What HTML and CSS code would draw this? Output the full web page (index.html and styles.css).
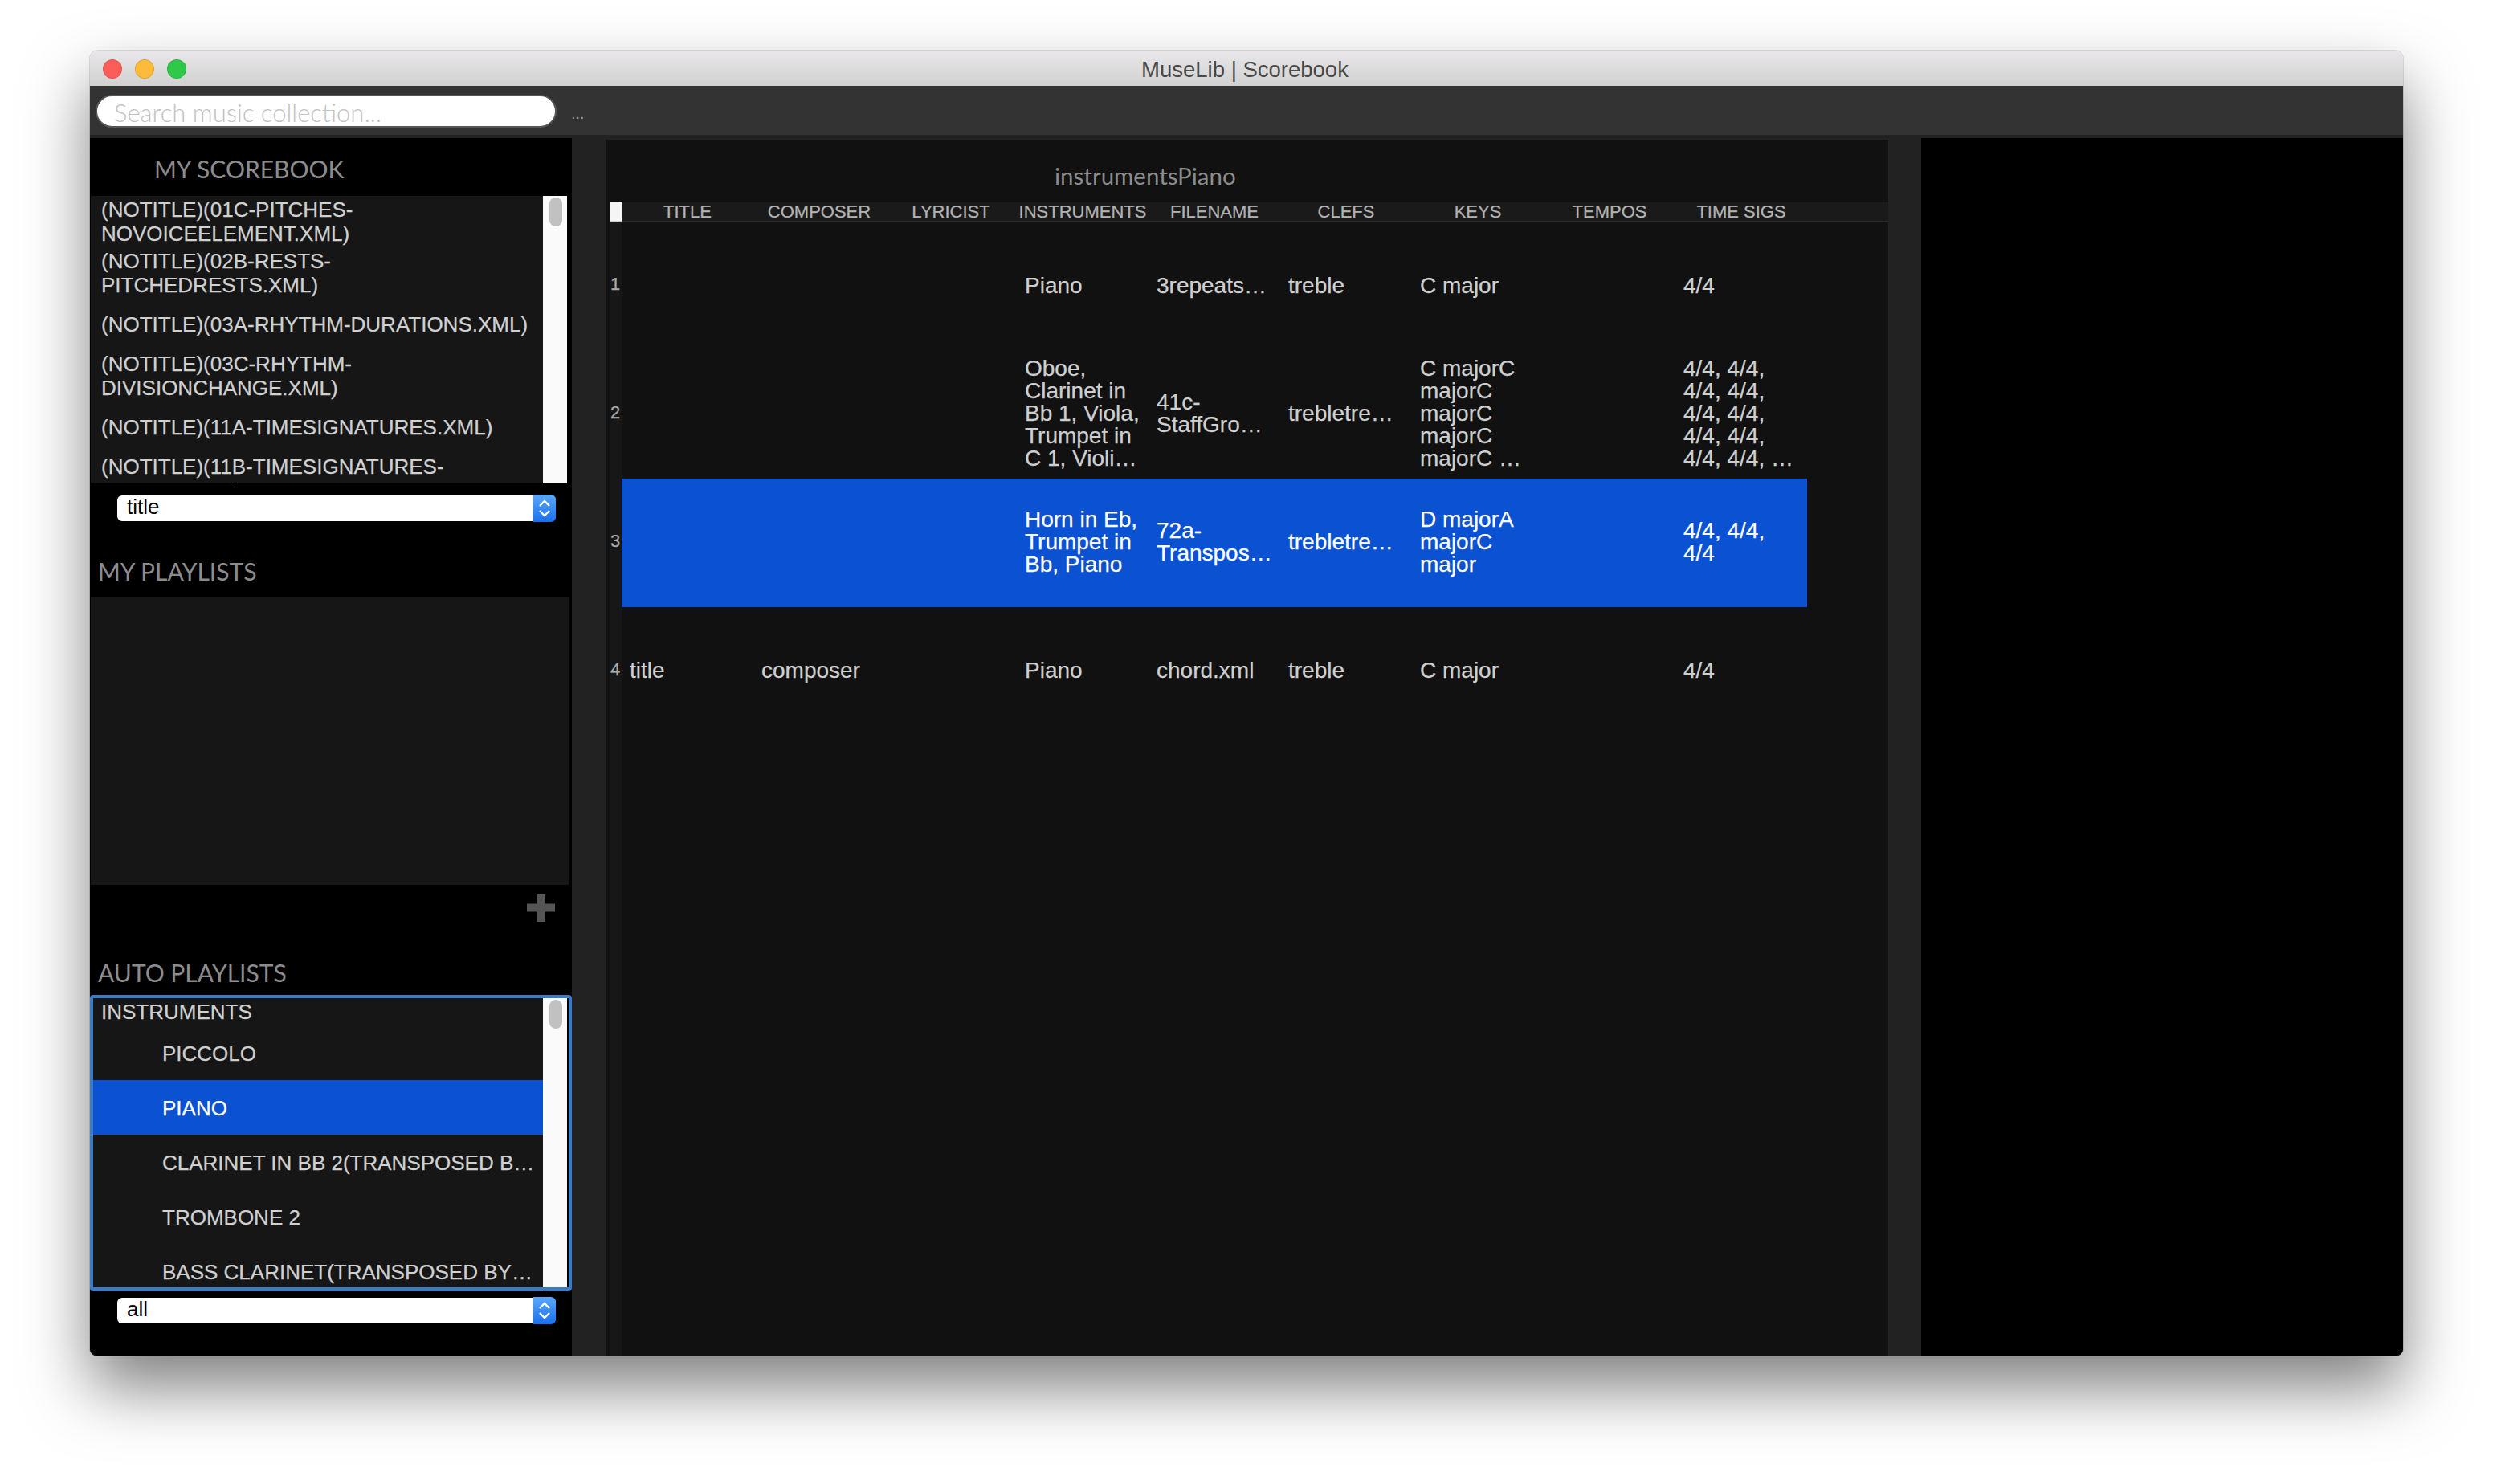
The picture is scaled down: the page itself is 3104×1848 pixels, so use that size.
FILE: index.html
```html
<!DOCTYPE html>
<html lang="en">
<head>
    <meta charset="UTF-8">
    <title>MuseLib | Scorebook</title>
    <link rel="stylesheet" href="styles.css">
</head>
<body>
    <div class="window">
        <header class="titlebar">
            <span class="light red"></span>
            <span class="light yellow"></span>
            <span class="light green"></span>
            <div class="title">MuseLib | Scorebook</div>
        </header>
        <div class="toolbar">
            <input class="search" type="text" placeholder="Search music collection...">
            <span class="dots">...</span>
        </div>
        <div class="content">
            <aside class="sidebar">
                <h2 class="head head-book">MY SCOREBOOK</h2>
                <div class="list list-book">
                    <ul class="items">
                        <li>(NOTITLE)(01C-PITCHES-<br>NOVOICEELEMENT.XML)</li>
                        <li>(NOTITLE)(02B-RESTS-<br>PITCHEDRESTS.XML)</li>
                        <li>(NOTITLE)(03A-RHYTHM-DURATIONS.XML)</li>
                        <li>(NOTITLE)(03C-RHYTHM-<br>DIVISIONCHANGE.XML)</li>
                        <li>(NOTITLE)(11A-TIMESIGNATURES.XML)</li>
                        <li>(NOTITLE)(11B-TIMESIGNATURES-<br>NOTIME.XML)</li>
                    </ul>
                    <div class="scrollbar"><div class="thumb"></div></div>
                </div>
                <div class="select select-book">
                    <span class="select-value">title</span>
                    <span class="select-btn">
                        <svg width="16" height="24" viewBox="0 0 16 24"><path d="M2 9 L8 3 L14 9 M2 15 L8 21 L14 15" fill="none" stroke="#fff" stroke-width="2.4"/></svg>
                    </span>
                </div>
                <h2 class="head head-my">MY PLAYLISTS</h2>
                <div class="playlist-box"></div>
                <div class="add-row">
                    <svg width="35" height="35" viewBox="0 0 35 35"><path d="M12 0h11v12.500h12v10H23V35H12V22.500H0v-10h12z" fill="#555"/></svg>
                </div>
                <h2 class="head head-auto">AUTO PLAYLISTS</h2>
                <div class="focus">
                    <div class="list list-auto">
                        <ul class="tree">
                            <li class="parent">INSTRUMENTS</li>
                            <li>PICCOLO</li>
                            <li class="picked">PIANO</li>
                            <li>CLARINET IN BB 2(TRANSPOSED B…</li>
                            <li>TROMBONE 2</li>
                            <li>BASS CLARINET(TRANSPOSED BY…</li>
                        </ul>
                        <div class="scrollbar"><div class="thumb"></div></div>
                    </div>
                </div>
                <div class="select select-auto">
                    <span class="select-value">all</span>
                    <span class="select-btn">
                        <svg width="16" height="24" viewBox="0 0 16 24"><path d="M2 9 L8 3 L14 9 M2 15 L8 21 L14 15" fill="none" stroke="#fff" stroke-width="2.4"/></svg>
                    </span>
                </div>
            </aside>
            <main class="main">
                <div class="main-title">instrumentsPiano</div>
                <div class="table-wrap">
                    <table class="scores">
                        <thead>
                            <tr>
                                <th class="corner"></th>
                                <th>TITLE</th>
                                <th>COMPOSER</th>
                                <th>LYRICIST</th>
                                <th>INSTRUMENTS</th>
                                <th>FILENAME</th>
                                <th>CLEFS</th>
                                <th>KEYS</th>
                                <th>TEMPOS</th>
                                <th>TIME SIGS</th>
                                <th class="filler"></th>
                            </tr>
                        </thead>
                        <tbody>
                            <tr>
                                <td class="num">1</td>
                                <td></td>
                                <td></td>
                                <td></td>
                                <td>Piano</td>
                                <td>3repeats…</td>
                                <td>treble</td>
                                <td>C major</td>
                                <td></td>
                                <td>4/4</td>
                                <td class="filler"></td>
                            </tr>
                            <tr>
                                <td class="num">2</td>
                                <td></td>
                                <td></td>
                                <td></td>
                                <td>Oboe,<br>Clarinet in<br>Bb 1, Viola,<br>Trumpet in<br>C 1, Violi…</td>
                                <td>41c-<br>StaffGro…</td>
                                <td>trebletre…</td>
                                <td>C majorC<br>majorC<br>majorC<br>majorC<br>majorC …</td>
                                <td></td>
                                <td>4/4, 4/4,<br>4/4, 4/4,<br>4/4, 4/4,<br>4/4, 4/4,<br>4/4, 4/4, …</td>
                                <td class="filler"></td>
                            </tr>
                            <tr class="selected">
                                <td class="num">3</td>
                                <td></td>
                                <td></td>
                                <td></td>
                                <td>Horn in Eb,<br>Trumpet in<br>Bb, Piano</td>
                                <td>72a-<br>Transpos…</td>
                                <td>trebletre…</td>
                                <td>D majorA<br>majorC<br>major</td>
                                <td></td>
                                <td>4/4, 4/4,<br>4/4</td>
                                <td class="filler"></td>
                            </tr>
                            <tr>
                                <td class="num">4</td>
                                <td>title</td>
                                <td>composer</td>
                                <td></td>
                                <td>Piano</td>
                                <td>chord.xml</td>
                                <td>treble</td>
                                <td>C major</td>
                                <td></td>
                                <td>4/4</td>
                                <td class="filler"></td>
                            </tr>
                        </tbody>
                    </table>
                </div>
            </main>
            <div class="right-panel"></div>
        </div>
    </div>
</body>
</html>
```
FILE: styles.css
```css
* {
    box-sizing: border-box;
}

html, body {
    margin: 0;
    height: 100%;
    background: #fff;
    font-family: "Liberation Sans", Arial, sans-serif;
    overflow: hidden;
}

body {
    padding: 63px 112px;
}

ul {
    list-style: none;
    margin: 0;
    padding: 0;
}

.window {
    width: 2880px;
    height: 1625px;
    display: flex;
    flex-direction: column;
    border-radius: 10px 10px 8px 8px;
    overflow: hidden;
    box-shadow: 0 40px 80px rgba(0, 0, 0, 0.5), 0 0 0 1px rgba(0, 0, 0, 0.12);
}

.titlebar {
    height: 44px;
    flex: none;
    display: flex;
    align-items: center;
    padding-left: 16px;
    gap: 16px;
    position: relative;
    background: linear-gradient(#e9e7e9, #d1d1d1);
    border-top: 1px solid #c4c4c4;
}

.light {
    width: 24px;
    height: 24px;
    border-radius: 50%;
    border: 1px solid rgba(0, 0, 0, 0.12);
}

.red { background: #fc5d58; }
.yellow { background: #fdbb3c; }
.green { background: #2fc94a; }

.title {
    position: absolute;
    left: 0;
    right: 4px;
    top: 2px;
    bottom: 0;
    display: flex;
    align-items: center;
    justify-content: center;
    font-size: 27.500px;
    color: #484848;
}

.toolbar {
    height: 61px;
    flex: none;
    display: flex;
    align-items: center;
    padding: 2px 0 0 7px;
    background: #333;
}

.search {
    width: 574px;
    height: 41px;
    border: 2px solid #555;
    border-radius: 21px;
    padding: 2px 21px 0 21px;
    background: #fff;
    font-family: Lato, sans-serif;
    font-size: 31px;
    font-weight: 300;
    outline: none;
}

.search::placeholder {
    color: #c2c2c2;
}

.dots {
    margin-left: 18px;
    margin-top: 6px;
    color: #999;
    font-size: 20px;
}

.content {
    flex: 1;
    display: flex;
    min-height: 0;
    background: #222;
}

.sidebar {
    width: 600px;
    flex: none;
    margin-top: 4px;
    background: #000;
}

.head {
    margin: 0;
    font-family: Lato, sans-serif;
    font-weight: 400;
    font-size: 30px;
    line-height: 40px;
    color: #8c8c8c;
}

.head-book {
    height: 72px;
    padding: 18px 0 0 80px;
}

.head-my {
    height: 95px;
    padding: 42px 0 0 10px;
}

.head-auto {
    height: 59px;
    padding: 11px 0 0 10px;
}

.list {
    display: flex;
    background: #161616;
    color: #d0d0d0;
    font-size: 26px;
    line-height: 30px;
    overflow: hidden;
    -webkit-text-stroke: 0.25px;
}

.list-book {
    width: 593px;
    height: 358px;
    margin-left: 1px;
}

.items {
    flex: 1;
}

.items li {
    height: 64px;
    padding-left: 13px;
    display: flex;
    align-items: center;
}

.scrollbar {
    width: 30px;
    flex: none;
    padding: 2px 6px 0 8px;
    background: #fafafa;
}

.thumb {
    height: 36px;
    border-radius: 8px;
    background: #c1c1c1;
}

.select {
    width: 546px;
    height: 32px;
    margin-left: 34px;
    display: flex;
    justify-content: space-between;
    align-items: center;
    background: #fff;
    border-radius: 6px;
    color: #000;
    font-size: 26px;
}

.select-book {
    margin-top: 15px;
}

.select-auto {
    margin-top: 8px;
}

.select-value {
    padding: 0 0 4px 12px;
    line-height: 28px;
}

.select-btn {
    width: 28px;
    height: calc(100% + 2px);
    display: flex;
    align-items: center;
    justify-content: center;
    border-radius: 0 6px 6px 0;
    background: linear-gradient(#5aa8fb, #1a6fec);
}

.playlist-box {
    width: 595px;
    height: 358px;
    margin-left: 1px;
    background: #161616;
}

.add-row {
    height: 78px;
    display: flex;
    justify-content: flex-end;
    align-items: flex-start;
    padding: 11px 21px 0 0;
}

.focus {
    height: 369px;
    border: 4px solid #3a7bc5;
    border-bottom-width: 5px;
    border-radius: 4px;
    background: #000;
}

.list-auto {
    width: 590px;
    height: 360px;
}

.tree {
    flex: 1;
}

.tree li {
    height: 68px;
    padding: 2px 0 0 86px;
    line-height: 66px;
    white-space: nowrap;
}

.tree .parent {
    height: 34px;
    padding: 0 0 0 10px;
    line-height: 34px;
}

.tree .picked {
    background: #0b52d3;
    color: #fff;
}

.main {
    width: 1597px;
    flex: none;
    margin: 6px 0 0 42px;
    background: #111;
    display: flex;
    flex-direction: column;
}

.main-title {
    height: 78px;
    padding: 23px 0 0 559px;
    font-family: Lato, sans-serif;
    font-weight: 400;
    font-size: 29.500px;
    line-height: 44px;
    color: #8c8c8c;
}

.table-wrap {
    flex: 1;
    margin-left: 6px;
    background: linear-gradient(#171717, #171717) left top / 14px 100% no-repeat;
}

.scores {
    width: 1591px;
    table-layout: fixed;
    border-collapse: collapse;
    font-size: 28px;
    line-height: 28px;
    color: #cfcfcf;
    -webkit-text-stroke: 0.25px;
}

.scores th {
    width: 164px;
    height: 24px;
    padding: 0;
    font-size: 22px;
    font-weight: normal;
    line-height: 22px;
    color: #b2b2b2;
    background: #1a1a1a;
    border-bottom: 2px solid #2a2a2a;
    white-space: nowrap;
}

.scores th.corner {
    width: 14px;
    background: #f5f5f5;
    border-bottom-color: #ccc;
}

.scores th.filler,
.scores td.filler {
    width: 101px;
}

.scores td {
    height: 160px;
    padding: 0 0 2px 10px;
    vertical-align: middle;
    white-space: nowrap;
    overflow: hidden;
}

.scores td.num {
    padding: 0 0 5px;
    font-size: 22px;
    color: #aaa;
    text-align: left;
}

.selected td {
    background: #0b52d3;
    color: #fff;
}

.selected td.num,
.selected td.filler {
    background: none;
}

.selected td.num {
    color: #aaa;
}

.right-panel {
    flex: 1;
    margin: 4px 0 0 41px;
    background: #000;
}
```
